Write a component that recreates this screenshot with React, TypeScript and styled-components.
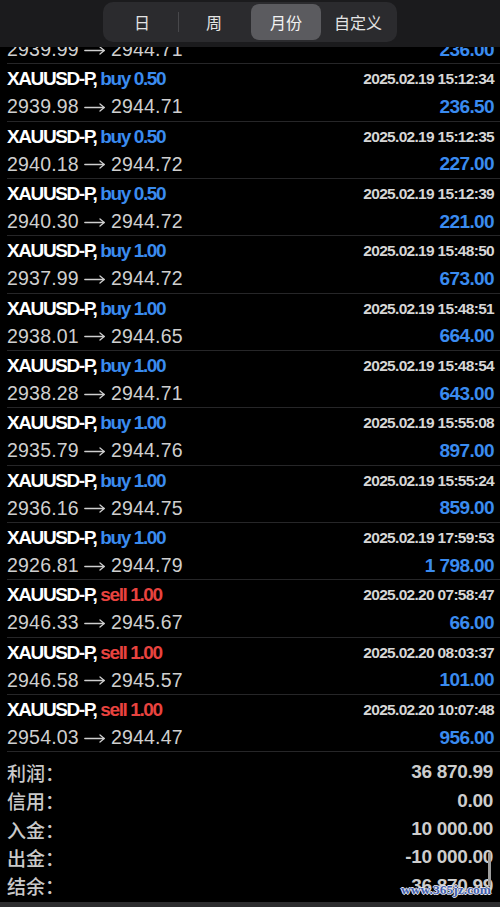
import React from "react";
import styled, { createGlobalStyle } from "styled-components";

const GlobalStyle = createGlobalStyle`
  html, body {
    margin: 0;
    padding: 0;
    background: #000;
  }
  body {
    width: 500px;
    height: 907px;
    overflow: hidden;
    font-family: "Liberation Sans", Arial, sans-serif;
    -webkit-font-smoothing: antialiased;
  }
`;

type Deal = {
  side: "buy" | "sell";
  vol: string;
  time: string;
  open: string;
  close: string;
  profit: string;
};

const deals: Deal[] = [
  { side: "buy", vol: "0.50", time: "2025.02.19 15:12:33", open: "2939.99", close: "2944.71", profit: "236.00" },
  { side: "buy", vol: "0.50", time: "2025.02.19 15:12:34", open: "2939.98", close: "2944.71", profit: "236.50" },
  { side: "buy", vol: "0.50", time: "2025.02.19 15:12:35", open: "2940.18", close: "2944.72", profit: "227.00" },
  { side: "buy", vol: "0.50", time: "2025.02.19 15:12:39", open: "2940.30", close: "2944.72", profit: "221.00" },
  { side: "buy", vol: "1.00", time: "2025.02.19 15:48:50", open: "2937.99", close: "2944.72", profit: "673.00" },
  { side: "buy", vol: "1.00", time: "2025.02.19 15:48:51", open: "2938.01", close: "2944.65", profit: "664.00" },
  { side: "buy", vol: "1.00", time: "2025.02.19 15:48:54", open: "2938.28", close: "2944.71", profit: "643.00" },
  { side: "buy", vol: "1.00", time: "2025.02.19 15:55:08", open: "2935.79", close: "2944.76", profit: "897.00" },
  { side: "buy", vol: "1.00", time: "2025.02.19 15:55:24", open: "2936.16", close: "2944.75", profit: "859.00" },
  { side: "buy", vol: "1.00", time: "2025.02.19 17:59:53", open: "2926.81", close: "2944.79", profit: "1 798.00" },
  { side: "sell", vol: "1.00", time: "2025.02.20 07:58:47", open: "2946.33", close: "2945.67", profit: "66.00" },
  { side: "sell", vol: "1.00", time: "2025.02.20 08:03:37", open: "2946.58", close: "2945.57", profit: "101.00" },
  { side: "sell", vol: "1.00", time: "2025.02.20 10:07:48", open: "2954.03", close: "2944.47", profit: "956.00" },
];

const totals = [
  { label: "利润：", value: "36 870.99" },
  { label: "信用：", value: "0.00" },
  { label: "入金：", value: "10 000.00" },
  { label: "出金：", value: "-10 000.00" },
  { label: "结余：", value: "36 870.99" },
];

const periods = ["日", "周", "月份", "自定义"];
const activePeriod = 2;

const Screen = styled.div`
  position: relative;
  width: 500px;
  height: 907px;
  overflow: hidden;
  background: #000;
  display: flex;
  flex-direction: column;
`;

const Header = styled.div`
  flex: 0 0 47px;
  background: #1b1b1d;
  display: flex;
  justify-content: center;
  align-items: flex-start;
  padding-top: 2px;
  box-sizing: border-box;
`;

const Segmented = styled.div`
  display: grid;
  grid-template-columns: repeat(4, 72px);
  height: 40px;
  padding: 2px 3px;
  box-sizing: border-box;
  background: #2b2b2e;
  border-radius: 10px;
`;

const Segment = styled.div<{ $active: boolean; $divider: boolean }>`
  position: relative;
  display: flex;
  align-items: center;
  justify-content: center;
  margin: 0 1px;
  border-radius: 8px;
  background: ${(p) => (p.$active ? "#5b5b5f" : "transparent")};
  color: ${(p) => (p.$active ? "#f2f2f2" : "#e4e4e4")};
  font-family: "Noto Sans CJK SC", sans-serif;
  font-size: 16px;

  &::after {
    content: "";
    display: ${(p) => (p.$divider ? "block" : "none")};
    position: absolute;
    right: -2px;
    top: 8px;
    bottom: 8px;
    width: 1px;
    background: #48484b;
  }
`;

const Viewport = styled.div`
  flex: 1 1 auto;
  min-height: 0;
  overflow: hidden;
  display: flex;
  flex-direction: column;
`;

const List = styled.div`
  flex: 0 0 auto;
  margin-top: -40px;
  display: flex;
  flex-direction: column;
`;

const Row = styled.div`
  flex: 0 0 auto;
  height: 57.33px;
  box-sizing: border-box;
  margin-left: 7px;
  padding: 1px 6px 0 0;
  border-bottom: 1px solid #262628;
  display: grid;
  grid-template-columns: 1fr auto;
  grid-template-rows: 28px 1fr;
  align-items: center;
`;

const Title = styled.div`
  font-weight: 700;
  font-size: 19px;
  letter-spacing: -1.4px;
  color: #ffffff;
  white-space: nowrap;
`;

const SideText = styled.span<{ $side: "buy" | "sell" }>`
  color: ${(p) => (p.$side === "buy" ? "#3a8bef" : "#e8433f")};
`;

const Time = styled.div`
  justify-self: end;
  font-weight: 700;
  font-size: 15.5px;
  letter-spacing: -0.7px;
  color: #d6d6d6;
`;

const Prices = styled.div`
  font-size: 19.5px;
  letter-spacing: 0.2px;
  color: #cfcfcf;
  white-space: nowrap;
  display: flex;
  align-items: center;
`;

const ArrowIcon = styled.svg`
  width: 21px;
  height: 9px;
  margin: 1px 6px 0 5px;
  flex: 0 0 auto;
`;

const Profit = styled.div`
  justify-self: end;
  font-weight: 700;
  font-size: 19px;
  letter-spacing: -0.6px;
  color: #3a8bef;
`;

const Summary = styled.div`
  flex: 0 0 auto;
  padding: 6px 7px 0 7px;
  display: flex;
  flex-direction: column;
`;

const SummaryRow = styled.div`
  height: 28.3px;
  display: flex;
  align-items: center;
  justify-content: space-between;
`;

const Label = styled.div`
  font-family: "Noto Sans CJK SC", sans-serif;
  font-weight: 500;
  font-size: 19px;
  color: #c9c9c9;
`;

const Value = styled.div`
  font-weight: 700;
  font-size: 19px;
  letter-spacing: -0.3px;
  color: #cdcdcd;
`;

const BottomEdge = styled.div`
  margin-top: auto;
  flex: 0 0 5px;
  background: #2d2d2f;
`;

const ScrollIndicator = styled.div`
  position: absolute;
  right: 9px;
  top: 852px;
  width: 3px;
  height: 34px;
  border-radius: 2px;
  background: #9d9d9d;
`;

const Watermark = styled.div`
  position: absolute;
  right: 9px;
  top: 882px;
  font-family: "Liberation Serif", serif;
  font-weight: 700;
  font-size: 13.5px;
  color: #3f5fae;
  text-shadow: -1px 0 #e8e8f0, 1px 0 #e8e8f0, 0 -1px #e8e8f0, 0 1px #e8e8f0;
`;

function Arrow() {
  return (
    <ArrowIcon viewBox="0 0 21 9" fill="none" stroke="#cfcfcf" strokeWidth="1.3" strokeLinecap="round" strokeLinejoin="round">
      <path d="M0.8 4.5H20.2" />
      <path d="M16 1L20.2 4.5L16 8" />
    </ArrowIcon>
  );
}

export default function App() {
  return (
    <Screen>
      <GlobalStyle />
      <Header>
        <Segmented>
          {periods.map((p, i) => (
            <Segment
              key={p}
              $active={i === activePeriod}
              $divider={i < periods.length - 1 && i !== activePeriod && i + 1 !== activePeriod}
            >
              {p}
            </Segment>
          ))}
        </Segmented>
      </Header>
      <Viewport>
        <List>
          {deals.map((d) => (
            <Row key={d.time}>
              <Title>
                XAUUSD-P, <SideText $side={d.side}>{d.side} {d.vol}</SideText>
              </Title>
              <Time>{d.time}</Time>
              <Prices>
                <span>{d.open}</span>
                <Arrow />
                <span>{d.close}</span>
              </Prices>
              <Profit>{d.profit}</Profit>
            </Row>
          ))}
        </List>
        <Summary>
          {totals.map((t) => (
            <SummaryRow key={t.label}>
              <Label>{t.label}</Label>
              <Value>{t.value}</Value>
            </SummaryRow>
          ))}
        </Summary>
        <BottomEdge />
      </Viewport>
      <ScrollIndicator />
      <Watermark>www.365jz.com</Watermark>
    </Screen>
  );
}
